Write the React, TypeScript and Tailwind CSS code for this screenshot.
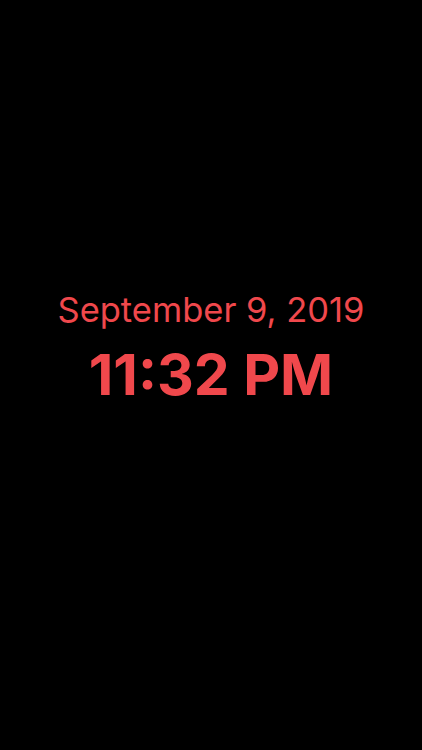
export default function App() {
  return (
    <div className="w-[422px] h-[750px] bg-black flex flex-col items-center pt-[290px]" style={{ fontFamily: 'Inter, "Noto Sans", sans-serif' }}>
      <div className="text-[34.5px] leading-[40px] text-[#f0484c] font-normal">September 9, 2019</div>
      <div className="text-[57px] leading-[70px] text-[#f0484c] font-bold mt-[10px]">11:32 PM</div>
    </div>
  );
}
